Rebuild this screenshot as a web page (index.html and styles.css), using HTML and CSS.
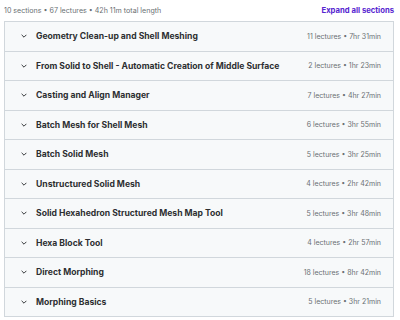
FILE: index.html
```html
<!DOCTYPE html>
<html lang="en">

<head>
    <meta charset="utf-8" />
    <title>Course content</title>
    <link rel="stylesheet" href="styles.css">
</head>

<body>
    <div class="header">
        <span class="summary">10 sections • 67 lectures • 42h 11m total length</span>
        <button class="expand">Expand all sections</button>
    </div>

    <ul class="sections">
        <li class="section">
            <span class="chevron"><svg viewBox="0 0 10 6" width="6" height="4"><path d="M1 1l4 4 4-4" /></svg></span>
            <span class="title">Geometry Clean-up and Shell Meshing</span>
            <span class="meta">11 lectures • 7hr 31min</span>
        </li>
        <li class="section">
            <span class="chevron"><svg viewBox="0 0 10 6" width="6" height="4"><path d="M1 1l4 4 4-4" /></svg></span>
            <span class="title">From Solid to Shell - Automatic Creation of Middle Surface</span>
            <span class="meta">2 lectures • 1hr 23min</span>
        </li>
        <li class="section">
            <span class="chevron"><svg viewBox="0 0 10 6" width="6" height="4"><path d="M1 1l4 4 4-4" /></svg></span>
            <span class="title">Casting and Align Manager</span>
            <span class="meta">7 lectures • 4hr 27min</span>
        </li>
        <li class="section">
            <span class="chevron"><svg viewBox="0 0 10 6" width="6" height="4"><path d="M1 1l4 4 4-4" /></svg></span>
            <span class="title">Batch Mesh for Shell Mesh</span>
            <span class="meta">6 lectures • 3hr 55min</span>
        </li>
        <li class="section">
            <span class="chevron"><svg viewBox="0 0 10 6" width="6" height="4"><path d="M1 1l4 4 4-4" /></svg></span>
            <span class="title">Batch Solid Mesh</span>
            <span class="meta">5 lectures • 3hr 25min</span>
        </li>
        <li class="section">
            <span class="chevron"><svg viewBox="0 0 10 6" width="6" height="4"><path d="M1 1l4 4 4-4" /></svg></span>
            <span class="title">Unstructured Solid Mesh</span>
            <span class="meta">4 lectures • 2hr 42min</span>
        </li>
        <li class="section">
            <span class="chevron"><svg viewBox="0 0 10 6" width="6" height="4"><path d="M1 1l4 4 4-4" /></svg></span>
            <span class="title">Solid Hexahedron Structured Mesh Map Tool</span>
            <span class="meta">5 lectures • 3hr 48min</span>
        </li>
        <li class="section">
            <span class="chevron"><svg viewBox="0 0 10 6" width="6" height="4"><path d="M1 1l4 4 4-4" /></svg></span>
            <span class="title">Hexa Block Tool</span>
            <span class="meta">4 lectures • 2hr 57min</span>
        </li>
        <li class="section">
            <span class="chevron"><svg viewBox="0 0 10 6" width="6" height="4"><path d="M1 1l4 4 4-4" /></svg></span>
            <span class="title">Direct Morphing</span>
            <span class="meta">18 lectures • 8hr 42min</span>
        </li>
        <li class="section">
            <span class="chevron"><svg viewBox="0 0 10 6" width="6" height="4"><path d="M1 1l4 4 4-4" /></svg></span>
            <span class="title">Morphing Basics</span>
            <span class="meta">5 lectures • 3hr 21min</span>
        </li>
    </ul>
</body>

</html>
```

FILE: styles.css
```css
:root {
    --text-color: #2d2f31;
    --muted-color: #6a6f73;
    --border-color: #d1d7dc;
    --row-bg: #f7f9fa;
    --purple: #5624d0;
}

body {
    margin: 0;
    padding: 0 6px 0 4px;
    font-family: Inter, "Liberation Sans", sans-serif;
    color: var(--text-color);
    background: #fff;
}

.header {
    display: flex;
    align-items: center;
    justify-content: space-between;
    height: 21px;
}

.summary {
    font-size: 7.1px;
    color: var(--muted-color);
}

.expand {
    border: 0;
    background: none;
    padding: 0;
    font-family: inherit;
    font-size: 7.7px;
    font-weight: 700;
    color: var(--purple);
    cursor: pointer;
}

.sections {
    list-style: none;
    margin: 0;
    padding: 0;
    border: 1px solid var(--border-color);
    border-top: 0;
}

.section {
    display: flex;
    align-items: center;
    height: 28.5px;
    padding: 0 12px 0 16px;
    background: var(--row-bg);
    border-top: 1px solid var(--border-color);
}

.chevron {
    display: flex;
    width: 15px;
}

.chevron svg {
    fill: none;
    stroke: var(--text-color);
    stroke-width: 1.6;
}

.title {
    flex: 1;
    font-size: 8.6px;
    font-weight: 700;
}

.meta {
    font-size: 7px;
    color: var(--muted-color);
}
```
